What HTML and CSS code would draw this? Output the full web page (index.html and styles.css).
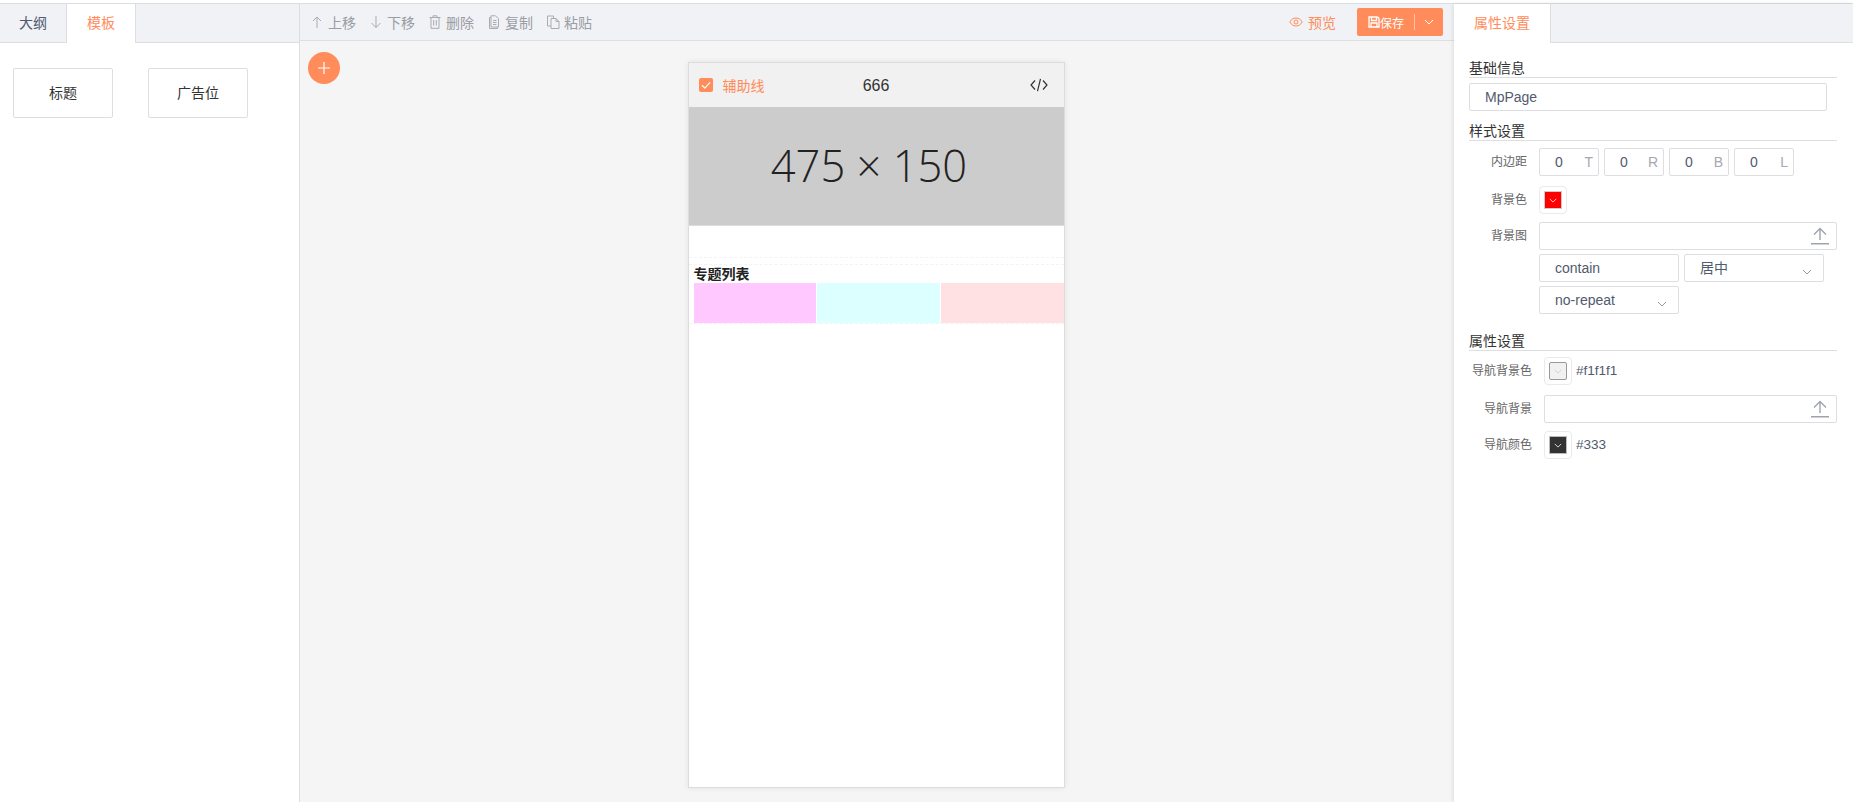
FILE: index.html
```html
<!DOCTYPE html>
<html lang="zh-CN">
<head>
    <meta charset="UTF-8">
    <title>页面编辑</title>
    <link rel="stylesheet" href="styles.css">
</head>
<body>
    <div class="editor">
        <!-- 左侧组件面板 -->
        <aside class="left-panel">
            <div class="tabs">
                <div class="tab">大纲</div>
                <div class="tab active">模板</div>
            </div>
            <div class="widget-list">
                <div class="widget">标题</div>
                <div class="widget">广告位</div>
            </div>
        </aside>

        <!-- 中间画布 -->
        <main class="center">
            <div class="toolbar">
                <span class="tool"><svg class="tool-icon" viewBox="0 0 14 14"><path d="M7 13V2M3 6l4-4 4 4"/></svg>上移</span>
                <span class="tool"><svg class="tool-icon" viewBox="0 0 14 14"><path d="M7 1v11.500M2.500 8L7 12.500 11.500 8"/></svg>下移</span>
                <span class="tool"><svg class="tool-icon" viewBox="0 0 14 14"><path d="M1.500 2.500h11M5 2.500V.8h4v1.700M3 2.500v10.800h8V2.500M5.700 5v5.500M8.300 5v5.500"/></svg>删除</span>
                <span class="tool"><svg class="tool-icon" viewBox="0 0 14 14"><path d="M4 2.500H2.500v11h8V12M4 .8h4.500l3 3v8.200H4zM6 5.500h3.500M6 7.500h3.500M6 9.500h3.500"/></svg>复制</span>
                <span class="tool"><svg class="tool-icon" viewBox="0 0 14 14"><path d="M5 11H1.500V1h6v2.500M5 3.500h5l3 3v7H5zM10 3.500v3h3"/></svg>粘贴</span>
                <span class="toolbar-right">
                    <span class="preview"><svg class="eye" viewBox="0 0 14 14"><path d="M.8 7c1.500-2.600 3.600-4 6.200-4s4.700 1.400 6.200 4c-1.500 2.600-3.600 4-6.200 4S2.300 9.600.8 7z"/><circle cx="7" cy="7" r="2"/></svg>预览</span>
                    <span class="save-btn">
                        <span class="save-main"><svg class="save-icon" viewBox="0 0 12 12"><path d="M1 1h8.500L11 2.500V11H1zM3.500 1v3.500h5V1M3 11V7h6v4"/></svg>保存</span>
                        <span class="save-arrow"><svg class="chev" viewBox="0 0 10 6"><path d="M1 1l4 4 4-4"/></svg></span>
                    </span>
                </span>
            </div>
            <div class="canvas">
                <button class="add-btn" type="button"><svg viewBox="0 0 14 14"><path d="M7 1v12M1 7h12"/></svg></button>
                <div class="phone">
                    <div class="phone-head">
                        <span class="guide"><span class="check"><svg viewBox="0 0 12 12"><path d="M2.500 6.200l2.500 2.500 4.500-5"/></svg></span>辅助线</span>
                        <span class="phone-title">666</span>
                        <svg class="code-icon" viewBox="0 0 18 14"><path d="M5 2.500L1 7l4 4.500M13 2.500L17 7l-4 4.500M10.500 .8L7.500 13.200"/></svg>
                    </div>
                    <div class="banner">475 × 150</div>
                    <div class="blank"></div>
                    <div class="topic">
                        <div class="topic-title">专题列表</div>
                        <div class="topic-row">
                            <div class="topic-cell pink"></div>
                            <div class="topic-cell cyan"></div>
                            <div class="topic-cell rose"></div>
                        </div>
                    </div>
                </div>
            </div>
        </main>

        <!-- 右侧属性面板 -->
        <aside class="right-panel">
            <div class="tabs">
                <div class="tab active wide">属性设置</div>
            </div>
            <div class="props">
                <div class="section-title">基础信息</div>
                <div class="field name-field">MpPage</div>

                <div class="section-title">样式设置</div>
                <div class="row first-row">
                    <label class="row-label">内边距</label>
                    <div class="row-body">
                        <div class="field small"><span>0</span><em>T</em></div>
                        <div class="field small"><span>0</span><em>R</em></div>
                        <div class="field small"><span>0</span><em>B</em></div>
                        <div class="field small"><span>0</span><em>L</em></div>
                    </div>
                </div>
                <div class="row short-gap">
                    <label class="row-label">背景色</label>
                    <div class="row-body">
                        <span class="swatch"><span class="swatch-in red"><svg class="chev" viewBox="0 0 10 6"><path d="M1 1l4 4 4-4"/></svg></span></span>
                    </div>
                </div>
                <div class="row">
                    <label class="row-label">背景图</label>
                    <div class="row-body">
                        <div class="field upload">
                            <svg class="upload-icon" viewBox="0 0 18 18"><path d="M9 13V1.500M3 7.500l6-6 6 6M0 16.800h18"/></svg>
                        </div>
                        <div class="field select">contain</div>
                        <div class="field select">居中<svg class="chev" viewBox="0 0 10 6"><path d="M1 1l4 4 4-4"/></svg></div>
                        <div class="field select">no-repeat<svg class="chev" viewBox="0 0 10 6"><path d="M1 1l4 4 4-4"/></svg></div>
                    </div>
                </div>

                <div class="section-title attr-title">属性设置</div>
                <div class="row nav-row first-nav">
                    <label class="row-label">导航背景色</label>
                    <div class="row-body">
                        <span class="swatch"><span class="swatch-in light"><svg class="chev" viewBox="0 0 10 6"><path d="M1 1l4 4 4-4"/></svg></span></span>
                        <span class="swatch-text">#f1f1f1</span>
                    </div>
                </div>
                <div class="row nav-row short-gap">
                    <label class="row-label">导航背景</label>
                    <div class="row-body">
                        <div class="field upload">
                            <svg class="upload-icon" viewBox="0 0 18 18"><path d="M9 13V1.500M3 7.500l6-6 6 6M0 16.800h18"/></svg>
                        </div>
                    </div>
                </div>
                <div class="row nav-row">
                    <label class="row-label">导航颜色</label>
                    <div class="row-body">
                        <span class="swatch"><span class="swatch-in dark"><svg class="chev" viewBox="0 0 10 6"><path d="M1 1l4 4 4-4"/></svg></span></span>
                        <span class="swatch-text">#333</span>
                    </div>
                </div>
            </div>
        </aside>
    </div>
</body>
</html>
```

FILE: styles.css
```css
* {
    box-sizing: border-box;
}
html, body {
    margin: 0;
    height: 100%;
    overflow: hidden;
}
body {
    font-family: "Liberation Sans", Arial, "Noto Sans CJK SC", sans-serif;
    font-size: 12px;
    color: #515a6e;
    background-color: #fff;
    padding-top: 3px;
}
.editor {
    display: flex;
    height: 799px;
    border-top: 1px solid #dcdee2;
}
.left-panel {
    width: 300px;
    flex: none;
    border-right: 1px solid #dcdee2;
    background-color: #fff;
}
.tabs {
    display: flex;
    height: 39px;
    background-color: #f0f2f6;
    border-bottom: 1px solid #dcdee2;
}
.tab {
    width: 67px;
    height: 39px;
    line-height: 38px;
    text-align: center;
    font-size: 14px;
    color: #515a6e;
    border-right: 1px solid #dcdee2;
}
.tab.active {
    width: 69px;
    background-color: #fff;
    color: #ff8c5a;
}
.tab.wide {
    width: 97px;
}
.widget-list {
    display: flex;
    gap: 35px;
    padding: 25px 13px;
}
.widget {
    width: 100px;
    height: 50px;
    line-height: 48px;
    text-align: center;
    font-size: 14px;
    color: #333;
    border: 1px solid #dcdee2;
    border-radius: 2px;
}

.center {
    flex: 1;
    min-width: 0;
    background-color: #f5f5f5;
    display: flex;
    flex-direction: column;
}
.toolbar {
    height: 37px;
    flex: none;
    display: flex;
    align-items: center;
    padding-left: 10px;
    background-color: #f0f2f6;
    border-bottom: 1px solid #dcdee2;
    font-size: 14px;
    color: #9a9da3;
}
.tool {
    display: flex;
    align-items: center;
    margin-right: 13px;
}
.tool-icon {
    width: 14px;
    height: 14px;
    margin-right: 4px;
    fill: none;
    stroke: #a8abb2;
    stroke-width: 1;
}
.toolbar-right {
    margin-left: auto;
    display: flex;
    align-items: center;
    padding-right: 11px;
}
.preview {
    display: flex;
    align-items: center;
    color: #ff8c5a;
    margin-right: 21px;
}
.eye {
    width: 14px;
    height: 14px;
    margin-right: 5px;
    fill: none;
    stroke: #ff8c5a;
}
.save-btn {
    display: flex;
    align-items: center;
    width: 86px;
    height: 28px;
    background-color: #ff8c5a;
    border-radius: 2px;
    color: #fff;
    font-size: 12px;
}
.save-main {
    display: flex;
    align-items: center;
    width: 58px;
    height: 16px;
    padding-left: 11px;
    border-right: 1px solid #ffc4aa;
}
.save-icon {
    width: 12px;
    height: 12px;
    fill: none;
    stroke: #fff;
    stroke-width: 1.300;
}
.save-arrow {
    flex: 1;
    display: flex;
    justify-content: center;
}
.chev {
    width: 10px;
    height: 6px;
    fill: none;
    stroke: #fff;
}
.canvas {
    flex: 1;
    position: relative;
    display: flex;
    justify-content: center;
    padding-top: 21px;
}
.add-btn {
    position: absolute;
    left: 8px;
    top: 11px;
    width: 32px;
    height: 32px;
    padding: 0;
    border: 0;
    border-radius: 50%;
    background-color: #ff8c5a;
    display: flex;
    align-items: center;
    justify-content: center;
}
.add-btn svg {
    width: 14px;
    height: 14px;
    fill: none;
    stroke: #fff;
    stroke-width: 1.200;
}
.phone {
    width: 377px;
    height: 726px;
    margin-right: 2px;
    background-color: #fff;
    border: 1px solid #dcdcdc;
    box-shadow: 0 0 6px rgba(0,0,0,0.08);
}
.phone-head {
    height: 44px;
    background-color: #f1f1f1;
    display: grid;
    grid-template-columns: 1fr auto 1fr;
    align-items: center;
    padding: 0 16px 0 10px;
}
.guide {
    display: flex;
    align-items: center;
    font-size: 14px;
    color: #ff8c5a;
}
.check {
    width: 14px;
    height: 14px;
    margin-right: 10px;
    background-color: #ff8c5a;
    border-radius: 2px;
    display: flex;
}
.check svg {
    width: 14px;
    height: 14px;
    fill: none;
    stroke: #fff;
}
.phone-title {
    font-size: 16px;
    color: #333;
    margin-right: -6px;
    padding-top: 1px;
}
.code-icon {
    justify-self: end;
    width: 18px;
    height: 14px;
    fill: none;
    stroke: #333;
    stroke-width: 1.200;
}
.banner {
    height: 119px;
    background-color: #ccc;
    border-bottom: 1px solid #ddd;
    display: flex;
    align-items: center;
    justify-content: center;
    font-family: "Open Sans", sans-serif;
    font-weight: 300;
    font-size: 43.500px;
    color: #222;
    padding: 0 14px 2px 0;
}
.blank {
    height: 32px;
    border-bottom: 1px dashed #f3f3f3;
}
.topic {
    margin-top: 6px;
    padding-left: 5px;
    border-top: 1px dashed #f3f3f3;
    border-bottom: 1px dashed #f3f3f3;
}
.topic-title {
    font-size: 14px;
    font-weight: bold;
    line-height: 17px;
    padding-top: 1px;
    color: #222;
}
.topic-row {
    display: flex;
    gap: 1px;
    height: 40px;
}
.topic-cell {
    flex: 1;
}
.pink {
    background-color: #ffc8ff;
}
.cyan {
    background-color: #dcffff;
}
.rose {
    background-color: #ffe1e4;
}

.right-panel {
    width: 399px;
    flex: none;
    background-color: #fff;
    box-shadow: -1px 0 4px rgba(0,0,0,0.1);
    position: relative;
}
.props {
    padding: 17px 16px 0 15px;
}
.section-title {
    font-size: 14px;
    line-height: 16px;
    height: 18px;
    color: #333;
    border-bottom: 1px solid #dcdee2;
}
.field {
    height: 28px;
    line-height: 26px;
    border: 1px solid #dcdee2;
    border-radius: 2px;
    font-size: 14px;
    color: #515a6e;
    background-color: #fff;
}
.name-field {
    width: 358px;
    margin: 5px 0 12px;
    padding-left: 15px;
}
.row {
    display: flex;
    margin-bottom: 10px;
}
.first-row {
    margin-top: 7px;
}
.short-gap {
    margin-bottom: 8px;
}
.row-label {
    width: 58px;
    margin-right: 12px;
    flex: none;
    text-align: right;
    line-height: 28px;
    font-size: 12px;
    color: #666;
    white-space: nowrap;
}
.row-body {
    flex: 1;
    display: flex;
    flex-wrap: wrap;
    align-items: center;
    gap: 4px 5px;
}
.field.small {
    width: 60px;
    display: flex;
    justify-content: space-between;
    padding: 0 5px 0 15px;
}
.field.small em {
    font-style: normal;
    color: #a5a8ae;
}
.swatch {
    width: 28px;
    height: 28px;
    border: 1px solid #e8eaec;
    border-radius: 4px;
    display: flex;
    align-items: center;
    justify-content: center;
}
.swatch-in {
    width: 18px;
    height: 18px;
    display: flex;
    align-items: center;
    justify-content: center;
}
.swatch-in .chev {
    width: 8px;
    height: 5px;
}
.red {
    background-color: #f00;
    border: 1px solid #ccc;
}
.light {
    background-color: #f1f1f1;
    border: 1px solid #999;
    border-radius: 2px;
}
.light .chev {
    stroke: #ccc;
}
.dark {
    background-color: #333;
    border: 1px solid #bbb;
}
.swatch-text {
    font-size: 13.500px;
    color: #515a6e;
    margin: -2px 0 0 -1px;
}
.field.upload {
    width: 100%;
    display: flex;
    align-items: center;
    justify-content: flex-end;
    padding-right: 7px;
}
.upload-icon {
    width: 18px;
    height: 18px;
    fill: none;
    stroke: #9ea3ad;
    stroke-width: 1.400;
}
.field.select {
    width: 140px;
    padding-left: 15px;
    position: relative;
}
.field.select .chev {
    position: absolute;
    right: 11px;
    top: 14px;
    stroke: #999;
}
.attr-title {
    margin-top: 19px;
}
.nav-row .row-label {
    width: 63px;
}
.first-nav {
    margin-top: 6px;
}
```
